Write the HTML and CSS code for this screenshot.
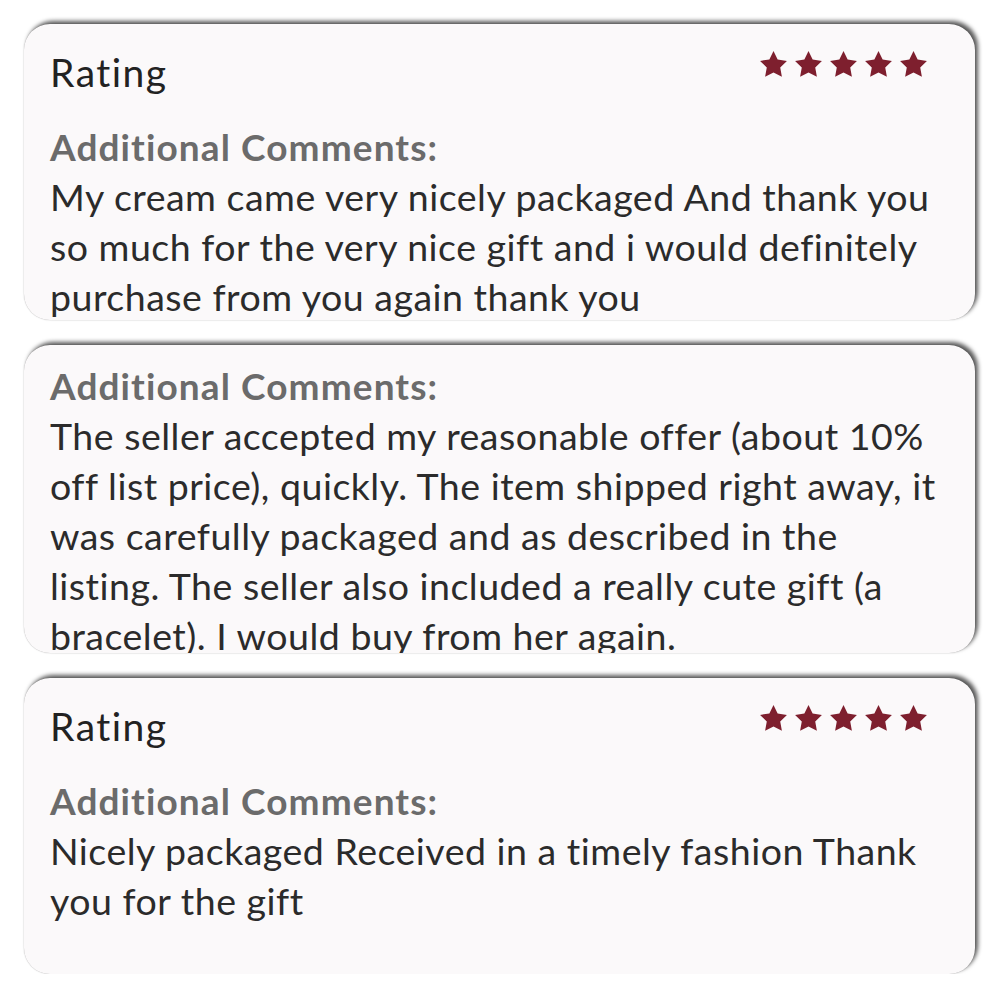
FILE: index.html
```html
<!DOCTYPE html>
<html>
<head>
    <meta charset="UTF-8">
    <title>Reviews</title>
    <link rel="stylesheet" href="styles.css">
</head>
<body>
    <div class="card">
        <div class="rating-row">
            <span class="rating-title">Rating</span>
            <span class="stars">
                <svg viewBox="0 0 24 24"><path d="M12 1.6l3.2 6.6 7.2 1-5.2 5.1 1.3 7.2L12 18.1l-6.5 3.4 1.3-7.2-5.2-5.1 7.2-1z"/></svg>
                <svg viewBox="0 0 24 24"><path d="M12 1.6l3.2 6.6 7.2 1-5.2 5.1 1.3 7.2L12 18.1l-6.5 3.4 1.3-7.2-5.2-5.1 7.2-1z"/></svg>
                <svg viewBox="0 0 24 24"><path d="M12 1.6l3.2 6.6 7.2 1-5.2 5.1 1.3 7.2L12 18.1l-6.5 3.4 1.3-7.2-5.2-5.1 7.2-1z"/></svg>
                <svg viewBox="0 0 24 24"><path d="M12 1.6l3.2 6.6 7.2 1-5.2 5.1 1.3 7.2L12 18.1l-6.5 3.4 1.3-7.2-5.2-5.1 7.2-1z"/></svg>
                <svg viewBox="0 0 24 24"><path d="M12 1.6l3.2 6.6 7.2 1-5.2 5.1 1.3 7.2L12 18.1l-6.5 3.4 1.3-7.2-5.2-5.1 7.2-1z"/></svg>
            </span>
        </div>
        <div class="label">Additional Comments:</div>
        <p class="comment">My cream came very nicely packaged And thank you so much for the very nice gift and i would definitely purchase from you again thank you</p>
    </div>

    <div class="card card-tall">
        <div class="label">Additional Comments:</div>
        <p class="comment">The seller accepted my reasonable offer (about 10% off list price), quickly. The item shipped right away, it was carefully packaged and as described in the listing. The seller also included a really cute gift (a bracelet). I would buy from her again.</p>
    </div>

    <div class="card">
        <div class="rating-row">
            <span class="rating-title">Rating</span>
            <span class="stars">
                <svg viewBox="0 0 24 24"><path d="M12 1.6l3.2 6.6 7.2 1-5.2 5.1 1.3 7.2L12 18.1l-6.5 3.4 1.3-7.2-5.2-5.1 7.2-1z"/></svg>
                <svg viewBox="0 0 24 24"><path d="M12 1.6l3.2 6.6 7.2 1-5.2 5.1 1.3 7.2L12 18.1l-6.5 3.4 1.3-7.2-5.2-5.1 7.2-1z"/></svg>
                <svg viewBox="0 0 24 24"><path d="M12 1.6l3.2 6.6 7.2 1-5.2 5.1 1.3 7.2L12 18.1l-6.5 3.4 1.3-7.2-5.2-5.1 7.2-1z"/></svg>
                <svg viewBox="0 0 24 24"><path d="M12 1.6l3.2 6.6 7.2 1-5.2 5.1 1.3 7.2L12 18.1l-6.5 3.4 1.3-7.2-5.2-5.1 7.2-1z"/></svg>
                <svg viewBox="0 0 24 24"><path d="M12 1.6l3.2 6.6 7.2 1-5.2 5.1 1.3 7.2L12 18.1l-6.5 3.4 1.3-7.2-5.2-5.1 7.2-1z"/></svg>
            </span>
        </div>
        <div class="label">Additional Comments:</div>
        <p class="comment">Nicely packaged Received in a timely fashion Thank you for the gift</p>
    </div>
</body>
</html>
```

FILE: styles.css
```css
body {
    margin: 0;
    padding: 24px 25px 0 24px;
    background-color: #ffffff;
    font-family: 'Lato', sans-serif;
    display: flex;
    flex-direction: column;
    gap: 25px;
}

.card {
    height: 296px;
    box-sizing: border-box;
    padding: 16px 26px 0 26px;
    background-color: #fbf9fa;
    border-radius: 26px;
    overflow: hidden;
    box-shadow: 3px -3px 4px rgba(0, 0, 0, 0.65), 0 0 1px rgba(0, 0, 0, 0.35);
}

.card-tall {
    height: 308px;
}

.rating-row {
    display: flex;
    justify-content: space-between;
    align-items: flex-start;
    height: 64px;
    margin-bottom: 18px;
}

.rating-title {
    font-size: 39px;
    line-height: 64px;
    letter-spacing: 1.5px;
    color: #222222;
}

.stars {
    display: flex;
    gap: 4px;
    margin-top: 9px;
    margin-right: 20px;
}

.stars svg {
    width: 31px;
    height: 31px;
    fill: #7e1f2e;
}

.label {
    font-size: 37px;
    line-height: 50px;
    font-weight: bold;
    letter-spacing: 1.1px;
    color: #6b6b6b;
}

.comment {
    margin: 0;
    font-size: 37.5px;
    line-height: 50px;
    color: #2b2b2b;
    letter-spacing: 0.5px;
}
```
